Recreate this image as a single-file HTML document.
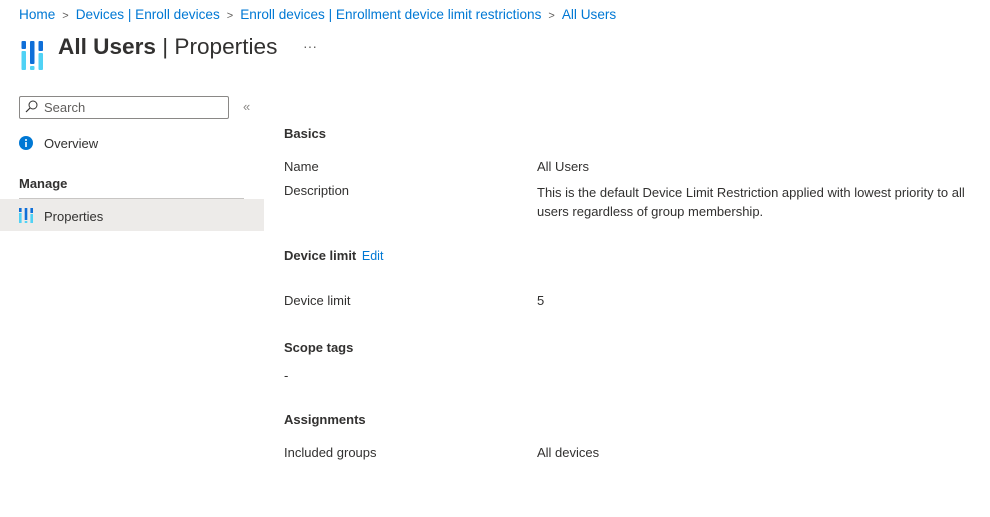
<!DOCTYPE html>
<html><head><meta charset="utf-8"><style>
body{margin:0;width:990px;height:517px;background:#fff;font-family:"Liberation Sans","Segoe UI",sans-serif;color:#323130;position:relative;overflow:hidden;font-size:13px}
.a{position:absolute;white-space:nowrap}
.bc{top:7px;left:19px;font-size:13.6px;color:#0078d4}
.bc span.s{color:#605e5c;margin:0 7px;font-size:11px}
h1{position:absolute;left:58px;top:34px;margin:0;font-size:22.6px;font-weight:normal;color:#323130}
h1 b{font-weight:600}
.srch{position:absolute;left:19px;top:96px;width:208px;height:21px;border:1px solid #8a8886;border-radius:2px}
.sel{position:absolute;left:0;top:199px;width:264px;height:32px;background:#edebe9}
.h{font-weight:bold;font-size:13px;color:#323130}
</style></head><body>
<div class="a bc">Home<span class="s">&gt;</span>Devices | Enroll devices<span class="s">&gt;</span>Enroll devices | Enrollment device limit restrictions<span class="s">&gt;</span>All Users</div>
<svg class="a" style="left:21px;top:40px" width="23" height="31" viewBox="0 0 23 31">
<rect x="0.5" y="1" width="4.5" height="8" rx="1" fill="#0f6fd8"/><rect x="0.5" y="11" width="4.5" height="19" rx="1" fill="#50d2f5"/>
<rect x="9" y="1" width="4.5" height="23" rx="1" fill="#0f6fd8"/><rect x="9" y="26" width="4.5" height="4" rx="1" fill="#50d2f5"/>
<rect x="17.5" y="1" width="4.5" height="10" rx="1" fill="#0f6fd8"/><rect x="17.5" y="13" width="4.5" height="17" rx="1" fill="#50d2f5"/>
</svg>
<h1><b>All Users</b> | Properties</h1>
<div class="a" style="left:303px;top:38px;font-size:14px;color:#605e5c">···</div>
<div class="srch"></div>
<svg class="a" style="left:25px;top:100px" width="13" height="13" viewBox="0 0 13 13"><circle cx="8" cy="5" r="4" fill="none" stroke="#323130" stroke-width="1"/><path d="M5 8 L1 12" stroke="#323130" stroke-width="1.2"/></svg>
<div class="a" style="left:44px;top:100px;color:#605e5c">Search</div>
<div class="a" style="left:243px;top:99px;color:#8a8886;font-size:13px">«</div>
<svg class="a" style="left:19px;top:136px" width="14" height="14"><circle cx="7" cy="7" r="7" fill="#0078d4"/><rect x="6.2" y="6" width="1.6" height="5" fill="#fff"/><circle cx="7" cy="4" r="1" fill="#fff"/></svg>
<div class="a" style="left:44px;top:136px">Overview</div>
<div class="a h" style="left:19px;top:176px;font-weight:600">Manage</div>
<div class="a" style="left:19px;top:198px;width:225px;height:1px;background:#c8c6c4"></div>
<div class="sel"></div>
<svg class="a" style="left:19px;top:208px" width="14" height="15" viewBox="0 0 14 15">
<rect x="0" y="0" width="2.6" height="4" fill="#0f6fd8"/><rect x="0" y="5" width="2.6" height="10" fill="#50d2f5"/>
<rect x="5.7" y="0" width="2.6" height="12" fill="#0f6fd8"/><rect x="5.7" y="13" width="2.6" height="2" fill="#50d2f5"/>
<rect x="11.4" y="0" width="2.6" height="5" fill="#0f6fd8"/><rect x="11.4" y="6" width="2.6" height="9" fill="#50d2f5"/>
</svg>
<div class="a" style="left:44px;top:209px">Properties</div>
<div class="a h" style="left:284px;top:126px">Basics</div>
<div class="a" style="left:284px;top:159px">Name</div><div class="a" style="left:537px;top:159px">All Users</div>
<div class="a" style="left:284px;top:183px">Description</div>
<div class="a" style="left:537px;top:183px;line-height:19px">This is the default Device Limit Restriction applied with lowest priority to all<br>users regardless of group membership.</div>
<div class="a" style="left:284px;top:248px"><span class="h">Device limit</span> <span style="color:#0078d4;font-size:12.5px;margin-left:2px">Edit</span></div>
<div class="a" style="left:284px;top:293px">Device limit</div><div class="a" style="left:537px;top:293px">5</div>
<div class="a h" style="left:284px;top:340px">Scope tags</div>
<div class="a" style="left:284px;top:368px">-</div>
<div class="a h" style="left:284px;top:412px">Assignments</div>
<div class="a" style="left:284px;top:445px">Included groups</div><div class="a" style="left:537px;top:445px">All devices</div>
</body></html>
